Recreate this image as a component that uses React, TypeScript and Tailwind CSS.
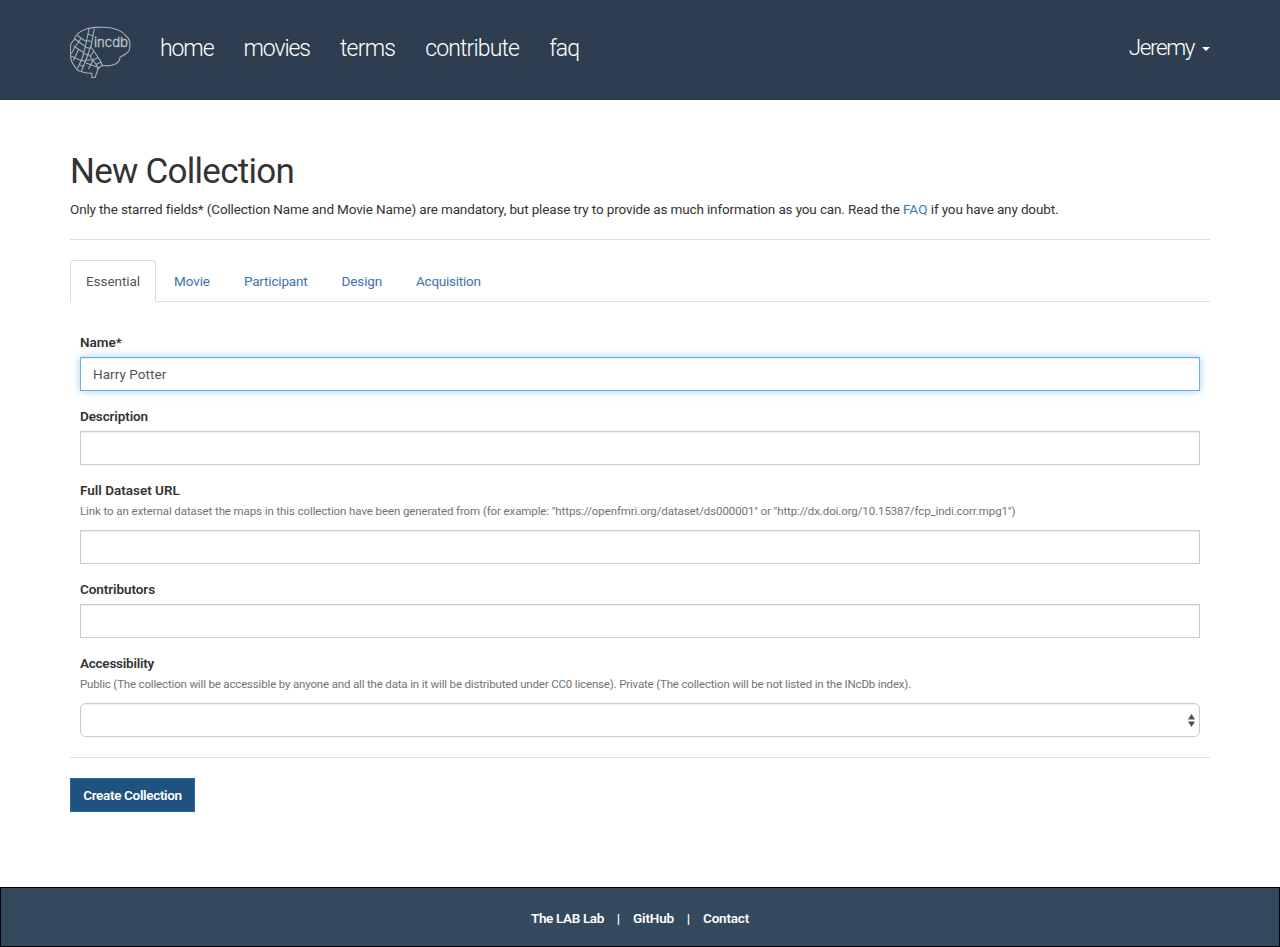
import type { ReactNode } from "react";

const navLinks = [
  { label: "home", tracking: "tracking-[-1.08px]" },
  { label: "movies", tracking: "tracking-[-1.08px]" },
  { label: "terms", tracking: "tracking-[-0.76px]" },
  { label: "contribute", tracking: "tracking-[-0.85px]" },
  { label: "faq", tracking: "tracking-[-0.9px]" },
];

const tabs = [
  { label: "Movie", tracking: "tracking-[-0.1px]" },
  { label: "Participant", tracking: "tracking-[-0.17px]" },
  { label: "Design", tracking: "tracking-[-0.13px]" },
  { label: "Acquisition", tracking: "tracking-[-0.26px]" },
];

function BrainLogo() {
  return (
    <svg width="61" height="53" viewBox="0 0 61 53" fill="none" stroke="#a5afb7" strokeWidth="1.1" strokeLinejoin="round" className="block">
      <path d="M15 3.500 C20 1.500 33 .5 40 1.800 C47 3 53 6 55.500 9.500 C59 12 60.300 16 59.800 19.500 C60 24 58.500 26.500 56 27.500 C54 29.500 51.500 30.500 50 31 C50 34 48.500 36 46.500 37.500 C43 39.500 38 40.500 32 39.500 C29 41 27.500 43 27 46 L25 51.500 L21.700 51.500 L22 47.300 C18 47 15 47 11.700 45.700 C8 45 6 43 5 40.700 C3 38 1 36 .8 32.300 C.3 29 0 27 .6 23.500 C0 20 1.500 16 4 14 C5 10 8 6 15 3.500Z" />
      <path d="M19 3 L16 17.500 L12.700 31 L7.500 42.500 M24.300 2.500 L21.500 18 L17 31 L11.500 45" />
      <path d="M18 8.500 L23 9.500 M16.500 14.500 L22 15.500 M15 21 L20.500 22.500 M13.500 27.500 L18 29 M11.500 34 L15.700 35.500 M9.500 39 L13.500 40.500" />
      <path d="M7.500 9.500 L16 15.500 M5 13 L14.500 20 M11 12.500 L5.500 20.500 L1 28 M3.500 20 L13.500 26.500 M8.500 23.500 L3.500 34.500 M1 30 L12 35" />
      <path d="M21 21 L26.500 29 L30.500 35 L32.500 40 M18 28 L23 34 L27 40 L28 43 M24 25 L20 30.500 M28 31.500 L23 34 M31 36 L26 38.500" />
      <path d="M15.700 34 L23 34 L18.500 43 M16 37 L27 41" />
      <text x="24" y="20.500" fill="#c0c7cc" stroke="#c0c7cc" strokeWidth=".35" fontFamily="Inter, sans-serif" fontSize="13.500" textLength="34" lengthAdjust="spacingAndGlyphs">incdb</text>
    </svg>
  );
}

function Field({ label, tracking = "", help, children }: { label: string; tracking?: string; help?: ReactNode; children: ReactNode }) {
  return (
    <div className="mb-[15px]">
      <label className={`mb-[5px] block h-5 font-semibold leading-5 ${tracking}`}>{label}</label>
      {help}
      {children}
    </div>
  );
}

const control = "block h-[34px] w-full border border-[#ccc] bg-white px-3 text-[13.5px] text-[#555] shadow-[inset_0_1px_1px_rgba(0,0,0,0.075)] outline-none";

export default function App() {
  return (
    <div className="flex h-[947px] flex-col bg-white font-['Roboto',sans-serif] text-[13.5px] leading-5 text-[#333]">
      <header className="h-[100px] shrink-0 bg-[#2e3e50]">
        <div className="mx-auto flex w-[1140px] pt-[26px] text-[23px] font-light leading-[42px] text-white">
          <a href="#" className="mr-[29px]"><BrainLogo /></a>
          <nav className="flex gap-[30px] pt-[2px]">
            {navLinks.map((l) => (
              <a key={l.label} href="#" className={l.tracking}>{l.label}</a>
            ))}
          </nav>
          <button className="ml-auto flex items-center self-start">
            <span className="text-[22.5px] tracking-[-1.4px]">Jeremy</span>
            <span className="ml-[8px] mt-[4px] border-x-4 border-t-4 border-x-transparent border-t-white" />
          </button>
        </div>
      </header>

      <main className="mx-auto w-[1140px] grow">
        <h1 className="mt-[52px] h-[40px] text-[35px] leading-[40px] tracking-[-0.74px]">New Collection</h1>
        <p className="mt-[7px] whitespace-nowrap tracking-[-0.136px]">
          Only the starred fields* (Collection Name and Movie Name) are mandatory, but please try to provide as much information as you can. Read the{" "}
          <a href="#" className="tracking-[0.1px] text-[#337ab7]">FAQ</a> if you have any doubt.
        </p>
        <hr className="mt-5 border-[#ddd]" />

        <div className="mt-5 flex h-[42px] border-b border-[#ddd] text-[#3d73ad]">
          <a href="#" className="mr-[2px] h-[42px] w-[86px] rounded-t border border-b-white border-[#ddd] bg-white px-[15px] py-[10px] tracking-[-0.06px] text-[#555]">Essential</a>
          {tabs.map((t) => (
            <a key={t.label} href="#" className={`mr-[2px] px-4 py-[11px] ${t.tracking}`}>{t.label}</a>
          ))}
        </div>

        <form className="px-[10px] pt-[30px]">
          <Field label="Name*">
            <input defaultValue="Harry Potter" className="block h-[34px] w-full border border-[#66afe9] bg-white px-3 tracking-[0.06px] text-[#555] shadow-[inset_0_1px_1px_rgba(0,0,0,0.075),0_0_8px_rgba(102,175,233,0.6)] outline-none" />
          </Field>
          <Field label="Description" tracking="tracking-[-0.11px]">
            <input className={control} />
          </Field>
          <Field
            label="Full Dataset URL"
            help={
              <p className="-mt-[5px] mb-[9px] whitespace-nowrap pt-[2px] text-[11.5px] leading-[19px] tracking-[-0.1px] text-[#737373]">
                Link to an external dataset the maps in this collection have been generated from (for example: "https://openfmri.org/dataset/ds000001" or "http://dx.doi.org/10.15387/fcp_indi.corr.mpg1")
              </p>
            }
          >
            <input className={control} />
          </Field>
          <Field label="Contributors" tracking="tracking-[-0.07px]">
            <input className={control} />
          </Field>
          <Field
            label="Accessibility"
            tracking="tracking-[-0.24px]"
            help={
              <p className="-mt-[5px] mb-[9px] whitespace-nowrap pt-[2px] text-[11.5px] leading-[19px] tracking-[-0.166px] text-[#737373]">
                Public (The collection will be accessible by anyone and all the data in it will be distributed under CC0 license). Private (The collection will be not listed in the INcDb index).
              </p>
            }
          >
            <button type="button" aria-label="Accessibility" className="flex h-[34px] w-full items-center justify-end rounded-[5px] border border-[#ccc] bg-white pr-[4px] shadow-[inset_0_1px_1px_rgba(0,0,0,0.075)]">
              <svg width="7" height="13" viewBox="0 0 7 13" fill="#505050"><path d="M3.500 0 7 5.500H0zM0 7.500h7L3.500 13z" /></svg>
            </button>
          </Field>
        </form>
        <hr className="mt-5 border-[#ddd]" />
        <button className="mt-5 h-[34px] w-[125px] whitespace-nowrap border border-[#2567a2] bg-[#20527f] font-semibold tracking-[-0.33px] text-white">Create Collection</button>
      </main>

      <footer className="flex h-[60px] shrink-0 items-center justify-center border border-black bg-[#34495e] pt-px font-semibold text-white">
        <a href="#" className="tracking-[-0.36px]">The LAB Lab</a>
        <span className="w-[29px] text-center">|</span>
        <a href="#" className="tracking-[-0.15px]">GitHub</a>
        <span className="w-[29px] text-center">|</span>
        <a href="#" className="tracking-[-0.2px]">Contact</a>
      </footer>
    </div>
  );
}
